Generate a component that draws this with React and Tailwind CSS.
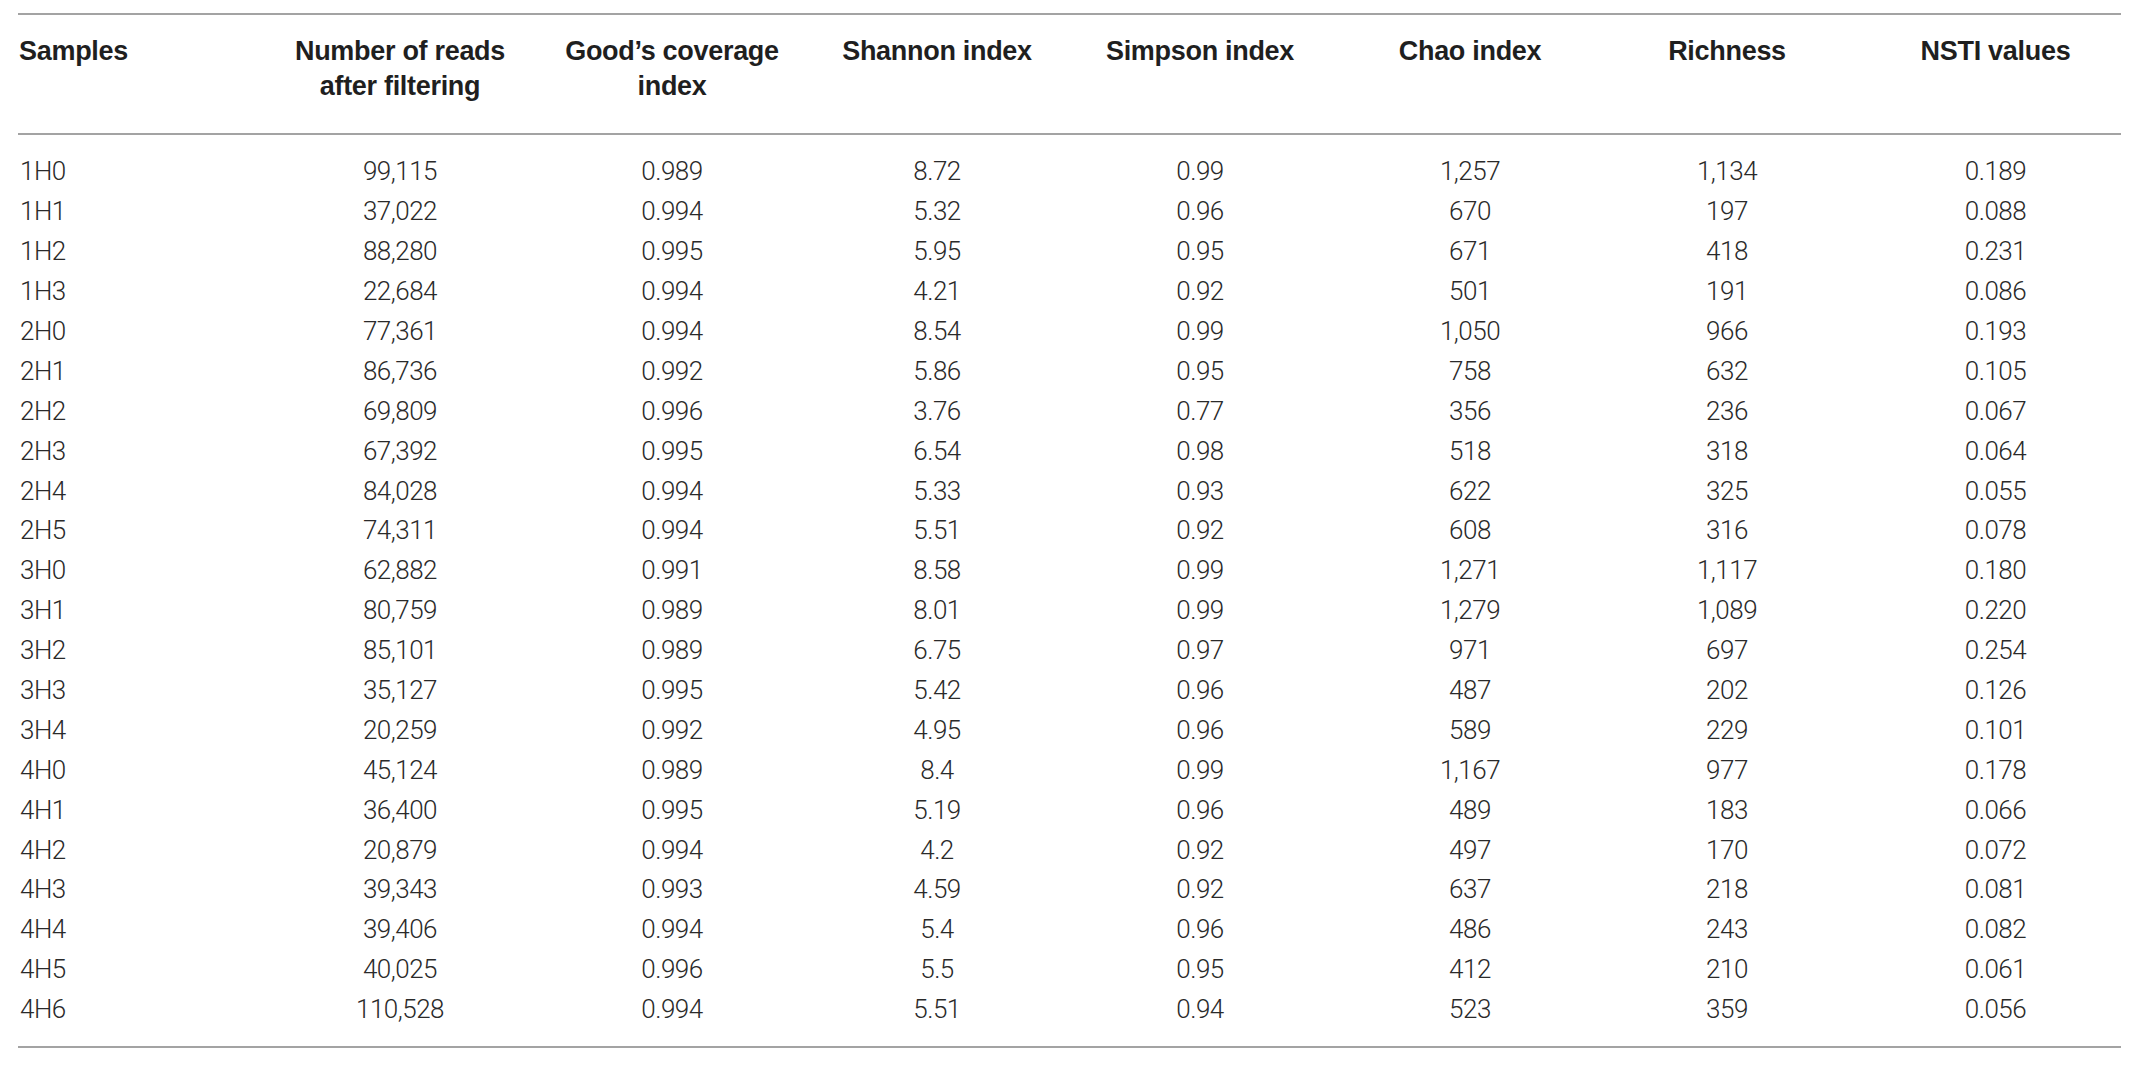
import React from 'react'

// ================================================================
// TABLE DATA
// ================================================================
const rows = [
  ['1H0', '99,115', '0.989', '8.72', '0.99', '1,257', '1,134', '0.189'],
  ['1H1', '37,022', '0.994', '5.32', '0.96', '670', '197', '0.088'],
  ['1H2', '88,280', '0.995', '5.95', '0.95', '671', '418', '0.231'],
  ['1H3', '22,684', '0.994', '4.21', '0.92', '501', '191', '0.086'],
  ['2H0', '77,361', '0.994', '8.54', '0.99', '1,050', '966', '0.193'],
  ['2H1', '86,736', '0.992', '5.86', '0.95', '758', '632', '0.105'],
  ['2H2', '69,809', '0.996', '3.76', '0.77', '356', '236', '0.067'],
  ['2H3', '67,392', '0.995', '6.54', '0.98', '518', '318', '0.064'],
  ['2H4', '84,028', '0.994', '5.33', '0.93', '622', '325', '0.055'],
  ['2H5', '74,311', '0.994', '5.51', '0.92', '608', '316', '0.078'],
  ['3H0', '62,882', '0.991', '8.58', '0.99', '1,271', '1,117', '0.180'],
  ['3H1', '80,759', '0.989', '8.01', '0.99', '1,279', '1,089', '0.220'],
  ['3H2', '85,101', '0.989', '6.75', '0.97', '971', '697', '0.254'],
  ['3H3', '35,127', '0.995', '5.42', '0.96', '487', '202', '0.126'],
  ['3H4', '20,259', '0.992', '4.95', '0.96', '589', '229', '0.101'],
  ['4H0', '45,124', '0.989', '8.4', '0.99', '1,167', '977', '0.178'],
  ['4H1', '36,400', '0.995', '5.19', '0.96', '489', '183', '0.066'],
  ['4H2', '20,879', '0.994', '4.2', '0.92', '497', '170', '0.072'],
  ['4H3', '39,343', '0.993', '4.59', '0.92', '637', '218', '0.081'],
  ['4H4', '39,406', '0.994', '5.4', '0.96', '486', '243', '0.082'],
  ['4H5', '40,025', '0.996', '5.5', '0.95', '412', '210', '0.061'],
  ['4H6', '110,528', '0.994', '5.51', '0.94', '523', '359', '0.056'],
]

const cols = 'grid grid-cols-[246px_272px_272px_258px_268px_272px_242px_273px]'

// ================================================================
// HEADER
// ================================================================
const Header = () => (
  <div className={`${cols} pt-[19px] pb-[29px] text-[27px] font-bold leading-[35px] tracking-[-0.3px] text-[#1f1f1f] font-['Liberation_Sans',sans-serif]`}>
    <div className="pl-[1px]">Samples</div>
    <div className="text-center">Number of reads<br />after filtering</div>
    <div className="text-center">Good’s coverage<br />index</div>
    <div className="text-center">Shannon index</div>
    <div className="text-center">Simpson index</div>
    <div className="text-center">Chao index</div>
    <div className="text-center">Richness</div>
    <div className="text-center pl-[22px]">NSTI values</div>
  </div>
)

// ================================================================
// MAIN APP COMPONENT
// ================================================================
function App() {
  return (
    <div className="min-h-screen bg-white">
      <div className="ml-[18px] w-[2103px] pt-[13px]">
        <div className="h-[2px] bg-[#a3a3a3]" />
        <Header />
        <div className="h-[2px] bg-[#a3a3a3]" />

        <div className="pt-[17px] pb-[16px] text-[26px] font-light tracking-[-0.5px] text-[#2a2a2a] font-['Roboto',sans-serif]">
          {rows.map((r) => (
            <div key={r[0]} className={`${cols} h-[39.9px] items-center`}>
              <div className="pl-[2px]">{r[0]}</div>
              {r.slice(1).map((v, i) => (
                <div key={i} className={i === 6 ? 'text-center pl-[22px]' : 'text-center'}>
                  {v}
                </div>
              ))}
            </div>
          ))}
        </div>

        <div className="h-[2px] bg-[#a3a3a3]" />
      </div>
    </div>
  )
}

export default App
